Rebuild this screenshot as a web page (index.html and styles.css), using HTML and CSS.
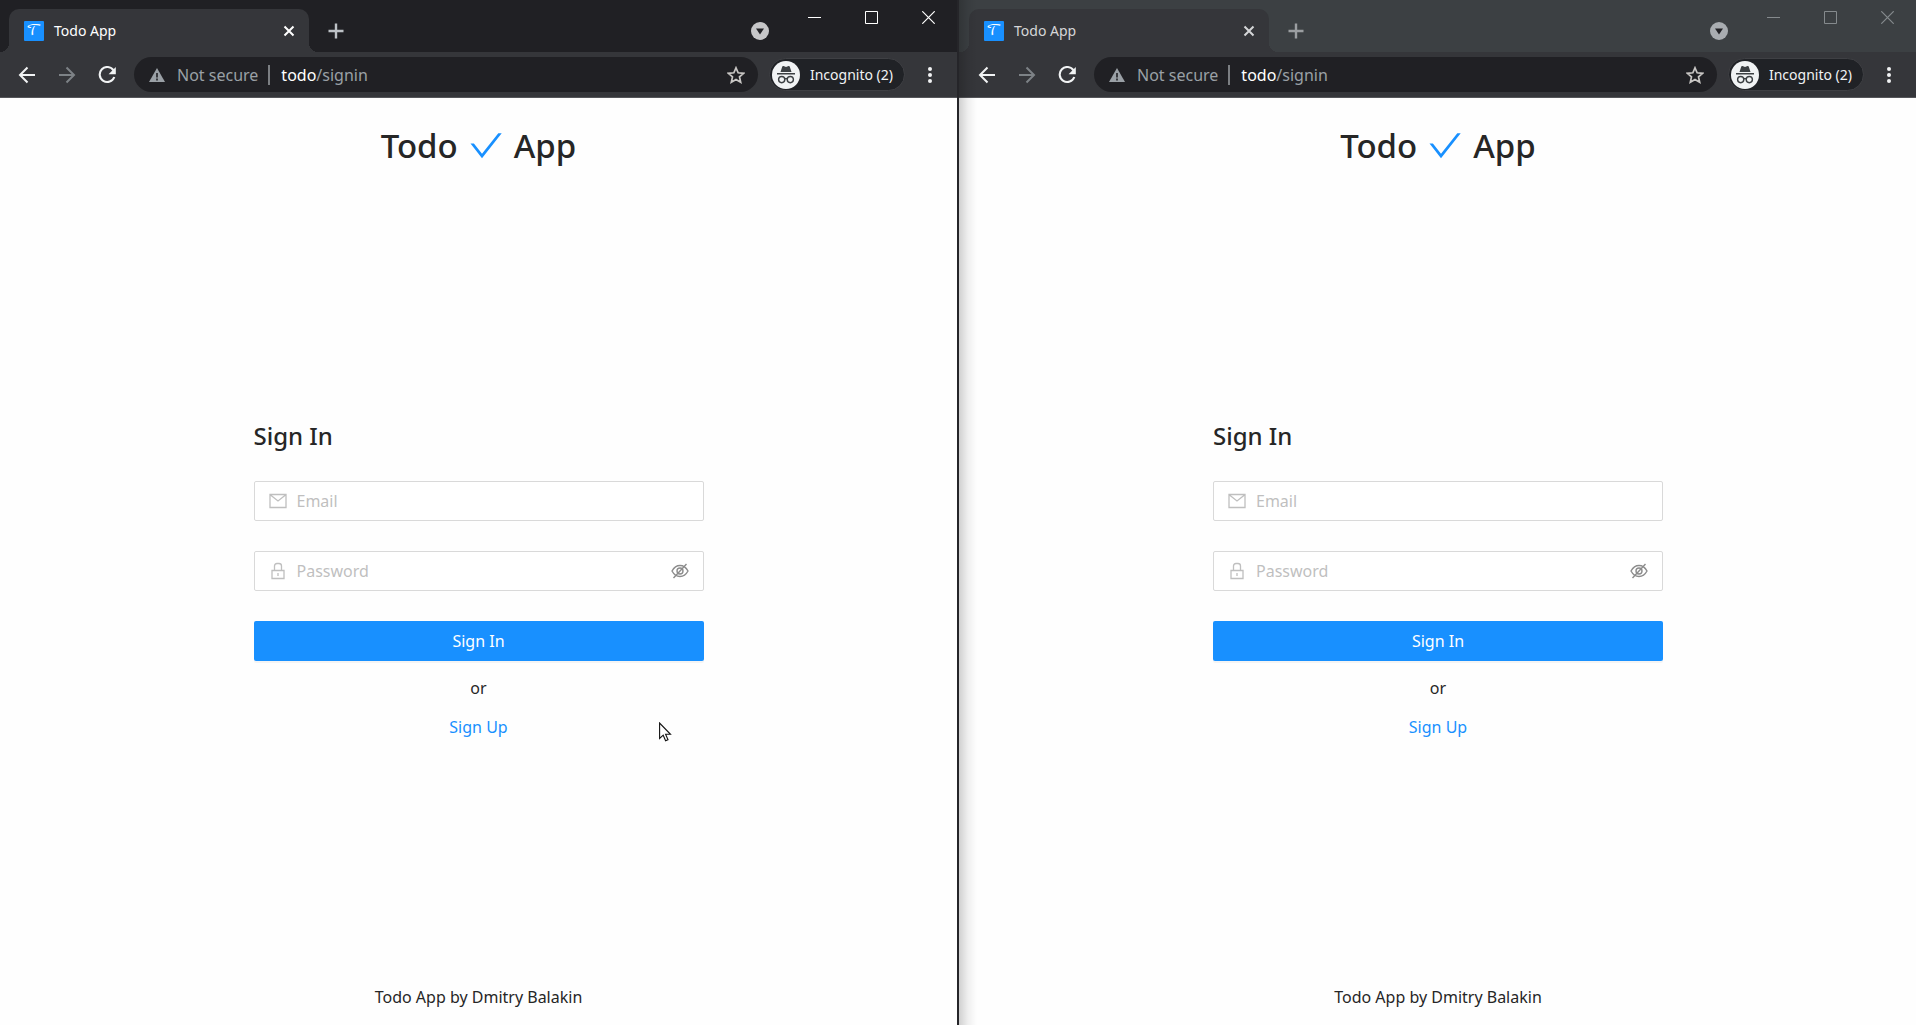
FILE: index.html
```html
<!DOCTYPE html>
<html lang="en">
<head>
<meta charset="utf-8">
<title>Todo App</title>
<link rel="stylesheet" href="styles.css">
</head>
<body>
<svg class="sprite" aria-hidden="true">
  <symbol id="i-close" viewBox="0 0 12 12"><path d="M1.5 1.5l9 9M10.500 1.500l-9 9" stroke="currentColor" stroke-width="2" fill="none"/></symbol>
  <symbol id="i-plus" viewBox="0 0 16 16"><path d="M8 .5v15M.5 8h15" stroke="currentColor" stroke-width="2.400" fill="none"/></symbol>
  <symbol id="i-down" viewBox="0 0 18 18"><circle cx="9" cy="9" r="9" fill="currentColor"/><path d="M5 6.500h8l-4 6z" fill="#222226"/></symbol>
  <symbol id="i-min" viewBox="0 0 13 13"><path d="M0 6.500h13" stroke="currentColor" fill="none"/></symbol>
  <symbol id="i-max" viewBox="0 0 13 13"><path d="M.5.5h12v12h-12z" stroke="currentColor" fill="none"/></symbol>
  <symbol id="i-x" viewBox="0 0 13 13"><path d="M.3.3l12.400 12.400M12.700.3L.3 12.700" stroke="currentColor" stroke-width="1.200" fill="none"/></symbol>
  <symbol id="i-back" viewBox="0 0 18 18"><path d="M17 9H2M9.500 1.500L2 9l7.500 7.500" stroke="currentColor" stroke-width="2" fill="none"/></symbol>
  <symbol id="i-forward" viewBox="0 0 18 18"><path d="M1 9H16M8.500 1.500L16 9l-7.500 7.500" stroke="currentColor" stroke-width="2" fill="none"/></symbol>
  <symbol id="i-reload" viewBox="0 0 18 18"><path d="M15.500 4.400A7.500 7.500 0 1 0 16.300 11" stroke="currentColor" stroke-width="2.100" fill="none"/><path d="M17.800 1v7.200h-7.200z" fill="currentColor"/></symbol>
  <symbol id="i-warn" viewBox="0 0 16 14"><path d="M8 0l8 14H0z" fill="currentColor"/><path d="M8 5v4.500M8 10.500v2" stroke="#202024" stroke-width="1.600"/></symbol>
  <symbol id="i-star" viewBox="0 0 18 18"><path d="M9 1.800l2.150 5 5.450.5-4.100 3.600 1.200 5.300L9 13.400l-4.700 2.800 1.200-5.300L1.400 7.300l5.450-.5z" stroke="currentColor" stroke-width="1.700" fill="none"/></symbol>
  <symbol id="i-spy" viewBox="0 0 28 28"><circle cx="14" cy="14" r="14" fill="#f1f3f4"/><path d="M8.500 11l1.700-5.300q.3-.9 1.300-.6l2.500.8 2.500-.8q1-.3 1.300.6L19.500 11zM5 12h18v1.400H5z" fill="#3c4043"/><g fill="none" stroke="#3c4043" stroke-width="1.400"><circle cx="9.700" cy="18.600" r="3.100"/><circle cx="18.300" cy="18.600" r="3.100"/><path d="M12.700 18q1.300-.9 2.600 0"/></g></symbol>
  <symbol id="i-dots" viewBox="0 0 4 16"><circle cx="2" cy="2" r="2"/><circle cx="2" cy="8" r="2"/><circle cx="2" cy="14" r="2"/></symbol>
  <symbol id="i-check" viewBox="0 0 32 26"><path d="M.5 10.500h3.400l8.100 10.200L28.300.3h3.400L12 25.300z" fill="#1890ff"/></symbol>
  <symbol id="i-mail" viewBox="0 0 18 16"><path d="M1 1.500h16v13H1zM1.500 2L9 8l7.500-6" stroke="currentColor" stroke-width="1.300" fill="none"/></symbol>
  <symbol id="i-lock" viewBox="0 0 18 18"><path d="M3 8.500h12v8H3zM5.500 8.500V4q0-2.500 2.500-2.500h2q2.500 0 2.500 2.500v4.500M9 11v3" stroke="currentColor" stroke-width="1.300" fill="none"/></symbol>
  <symbol id="i-eye" viewBox="0 0 18 18"><path d="M1 9q3-5.500 8-5.500T17 9q-3 5.500-8 5.500T1 9zM2.500 16L15.500 2" stroke="currentColor" stroke-width="1.400" fill="none"/><circle cx="9" cy="9" r="3" stroke="currentColor" stroke-width="1.400" fill="none"/></symbol>
</svg>

<div class="desktop">
  <section class="window" aria-label="First window">
    <header class="tabstrip">
      <div class="tab">
        <span class="favicon" aria-hidden="true">𝒯</span>
        <span class="tab-title">Todo App</span>
        <button class="icon-button" aria-label="Close tab"><svg class="s12"><use href="#i-close"/></svg></button>
      </div>
      <button class="icon-button new-tab" aria-label="New tab"><svg class="s16"><use href="#i-plus"/></svg></button>
      <button class="icon-button tab-search" aria-label="Search tabs"><svg class="s18"><use href="#i-down"/></svg></button>
      <div class="controls">
        <button class="icon-button" aria-label="Minimize"><svg class="s13"><use href="#i-min"/></svg></button>
        <button class="icon-button" aria-label="Maximize"><svg class="s13"><use href="#i-max"/></svg></button>
        <button class="icon-button" aria-label="Close"><svg class="s13"><use href="#i-x"/></svg></button>
      </div>
    </header>
    <nav class="toolbar" aria-label="Browser toolbar">
      <div class="nav-buttons">
        <button class="icon-button" aria-label="Back"><svg class="s18"><use href="#i-back"/></svg></button>
        <button class="icon-button muted" aria-label="Forward"><svg class="s18"><use href="#i-forward"/></svg></button>
        <button class="icon-button" aria-label="Reload"><svg class="s18"><use href="#i-reload"/></svg></button>
      </div>
      <div class="omnibox">
        <svg class="warn"><use href="#i-warn"/></svg>
        <span class="security">Not secure</span>
        <span class="url"><b>todo</b>/signin</span>
        <button class="icon-button star" aria-label="Bookmark"><svg class="s18"><use href="#i-star"/></svg></button>
      </div>
      <button class="profile"><svg class="s28"><use href="#i-spy"/></svg>Incognito (2)</button>
      <button class="icon-button menu" aria-label="Menu"><svg class="dots"><use href="#i-dots"/></svg></button>
    </nav>
    <div class="page">
      <header class="page-header"><h1>Todo <svg class="check"><use href="#i-check"/></svg> App</h1></header>
      <main>
        <form class="signin">
          <h2>Sign In</h2>
          <label class="field"><svg class="s18"><use href="#i-mail"/></svg><input type="email" placeholder="Email" aria-label="Email"></label>
          <div class="field"><svg class="s18"><use href="#i-lock"/></svg><input type="password" placeholder="Password" aria-label="Password"><button type="button" class="icon-button reveal" aria-label="Show password"><svg class="s18"><use href="#i-eye"/></svg></button></div>
          <button class="submit" type="submit">Sign In</button>
          <p>or</p>
          <a href="#signup">Sign Up</a>
        </form>
      </main>
      <footer>Todo App by Dmitry Balakin</footer>
    </div>
    <svg class="cursor" viewBox="0 0 13 20" aria-hidden="true"><path d="M.6 1v15.500l3.600-3.300 2.400 5.600 2.400-1-2.400-5.500h4.900z" fill="#fff" stroke="#111" stroke-width="1.100"/></svg>
  </section>

  <section class="window inactive" aria-label="Second window">
    <header class="tabstrip">
      <div class="tab">
        <span class="favicon" aria-hidden="true">𝒯</span>
        <span class="tab-title">Todo App</span>
        <button class="icon-button" aria-label="Close tab"><svg class="s12"><use href="#i-close"/></svg></button>
      </div>
      <button class="icon-button new-tab" aria-label="New tab"><svg class="s16"><use href="#i-plus"/></svg></button>
      <button class="icon-button tab-search" aria-label="Search tabs"><svg class="s18"><use href="#i-down"/></svg></button>
      <div class="controls">
        <button class="icon-button" aria-label="Minimize"><svg class="s13"><use href="#i-min"/></svg></button>
        <button class="icon-button" aria-label="Maximize"><svg class="s13"><use href="#i-max"/></svg></button>
        <button class="icon-button" aria-label="Close"><svg class="s13"><use href="#i-x"/></svg></button>
      </div>
    </header>
    <nav class="toolbar" aria-label="Browser toolbar">
      <div class="nav-buttons">
        <button class="icon-button" aria-label="Back"><svg class="s18"><use href="#i-back"/></svg></button>
        <button class="icon-button muted" aria-label="Forward"><svg class="s18"><use href="#i-forward"/></svg></button>
        <button class="icon-button" aria-label="Reload"><svg class="s18"><use href="#i-reload"/></svg></button>
      </div>
      <div class="omnibox">
        <svg class="warn"><use href="#i-warn"/></svg>
        <span class="security">Not secure</span>
        <span class="url"><b>todo</b>/signin</span>
        <button class="icon-button star" aria-label="Bookmark"><svg class="s18"><use href="#i-star"/></svg></button>
      </div>
      <button class="profile"><svg class="s28"><use href="#i-spy"/></svg>Incognito (2)</button>
      <button class="icon-button menu" aria-label="Menu"><svg class="dots"><use href="#i-dots"/></svg></button>
    </nav>
    <div class="page">
      <header class="page-header"><h1>Todo <svg class="check"><use href="#i-check"/></svg> App</h1></header>
      <main>
        <form class="signin">
          <h2>Sign In</h2>
          <label class="field"><svg class="s18"><use href="#i-mail"/></svg><input type="email" placeholder="Email" aria-label="Email"></label>
          <div class="field"><svg class="s18"><use href="#i-lock"/></svg><input type="password" placeholder="Password" aria-label="Password"><button type="button" class="icon-button reveal" aria-label="Show password"><svg class="s18"><use href="#i-eye"/></svg></button></div>
          <button class="submit" type="submit">Sign In</button>
          <p>or</p>
          <a href="#signup">Sign Up</a>
        </form>
      </main>
      <footer>Todo App by Dmitry Balakin</footer>
    </div>
  </section>
</div>
</body>
</html>
```
FILE: styles.css
```css
* { box-sizing: border-box; }
body {
  margin: 0;
  font: 16px/24px "Segoe UI", "Noto Sans", "Open Sans", sans-serif;
  color: #262626;
}
h1, h2, p { margin: 0; }
button, input { font: inherit; }
svg { display: block; flex: none; }
.sprite { position: absolute; width: 0; height: 0; }

.s12 { width: 12px; height: 12px; }
.s13 { width: 13px; height: 13px; }
.s16 { width: 16px; height: 16px; }
.s18 { width: 18px; height: 18px; }
.s28 { width: 28px; height: 28px; }

.desktop {
  display: grid;
  grid-template-columns: 1fr 1fr;
  min-height: 100vh;
  background: #252529;
}
.window {
  position: relative;
  display: flex;
  flex-direction: column;
  min-width: 0;
  border-right: 1px solid #252529;
  background: #35363a;
}

.icon-button {
  display: flex;
  align-items: center;
  justify-content: center;
  padding: 0;
  border: 0;
  background: none;
  color: inherit;
}

/* Tab strip */
.tabstrip {
  display: flex;
  height: 52px;
  background: #202024;
  color: #fff;
}
.tab {
  position: relative;
  display: flex;
  align-items: center;
  gap: 10px;
  width: 300px;
  height: 43px;
  margin: 9px 0 0 9px;
  padding: 0 14px 0 15px;
  border-radius: 10px 10px 0 0;
  background: #35363a;
  font-size: 14px;
}
.tab::before, .tab::after {
  content: "";
  position: absolute;
  bottom: 0;
  width: 9px;
  height: 9px;
}
.tab::before { right: 100%; background: radial-gradient(circle at 0 0, transparent 9px, #35363a 9px); }
.tab::after { left: 100%; background: radial-gradient(circle at 100% 0, transparent 9px, #35363a 9px); }
.favicon {
  width: 20px;
  height: 20px;
  border-radius: 1px;
  background: #1890ff;
  color: #fff;
  font: 15px/20px "DejaVu Math TeX Gyre", "DejaVu Serif", serif;
  text-align: center;
  overflow: hidden;
}
.tab-title { flex: 1; }
.new-tab { width: 36px; margin: 9px 0 0 9px; color: #bdc1c6; }
.tab-search { width: 36px; margin: 9px 8px 0 auto; color: #c6c6c8; }
.controls { display: flex; height: 35px; }
.controls .icon-button { width: 57px; }

/* Toolbar */
.toolbar {
  display: flex;
  align-items: center;
  height: 46px;
  padding-right: 10px;
  border-bottom: 1px solid #55565a;
  color: #f1f3f4;
}
.nav-buttons { display: flex; padding: 0 7px; }
.nav-buttons .icon-button { width: 40px; height: 40px; }
.icon-button.muted { color: #7d8286; }
.omnibox {
  display: flex;
  flex: 1;
  align-items: center;
  height: 35px;
  padding: 0 13px 0 15px;
  border-radius: 18px;
  background: #202024;
  color: #9aa0a6;
}
.warn { width: 16px; height: 14px; }
.security {
  margin-left: 12px;
  padding-right: 10px;
  border-right: 2px solid #7b7e82;
  line-height: 20px;
}
.url { flex: 1; margin-left: 11px; }
.url b { color: #fff; font-weight: 400; }
.star { color: #c8c6c4; }
.profile {
  display: flex;
  align-items: center;
  gap: 10px;
  height: 33px;
  margin-left: 11px;
  padding: 0 11px 0 2px;
  border: 1px solid #3f4044;
  border-radius: 17px;
  background: #202226;
  color: #f1f3f4;
  font-size: 14px;
}
.menu { width: 34px; height: 34px; margin-left: 8px; }
.dots { width: 4px; height: 16px; fill: currentColor; }

/* Page */
.page {
  display: flex;
  flex: 1;
  flex-direction: column;
  background: #fefefe;
}
.page-header { padding: 24px 0 28px; }
h1 {
  display: flex;
  align-items: center;
  justify-content: center;
  gap: 12px;
  font-size: 33px;
  line-height: 48px;
  font-weight: 500;
}
.check { width: 32px; height: 26px; }
main { display: flex; flex: 1; align-items: center; justify-content: center; }
.signin {
  display: flex;
  flex-direction: column;
  width: 450px;
  max-width: 100%;
  text-align: center;
}
h2 {
  margin-bottom: 29px;
  font-size: 24px;
  line-height: 32px;
  font-weight: 500;
  text-align: left;
}
.field {
  display: flex;
  align-items: center;
  gap: 10px;
  height: 40px;
  margin-bottom: 30px;
  padding: 0 14px;
  border: 1px solid #d9d9d9;
  border-radius: 2px;
  background: #fff;
  color: #bfbfbf;
}
.field input {
  flex: 1;
  min-width: 0;
  padding: 0;
  border: 0;
  outline: 0;
  background: none;
  color: #262626;
}
.field input::placeholder { color: #bfbfbf; opacity: 1; }
.reveal { color: #8c8c8c; }
.submit {
  height: 40px;
  padding: 0;
  border: 0;
  border-radius: 2px;
  background: #1890ff;
  box-shadow: 0 2px 0 rgba(0, 0, 0, 0.04);
  color: #fff;
}
.signin p { margin: 15px 0; }
.signin a { color: #1890ff; text-decoration: none; }
footer { padding: 24px 0 16px; text-align: center; }

/* Mouse pointer over the first window */
.cursor { position: absolute; top: 722px; left: 659px; width: 13px; height: 20px; }

/* Window without focus, shaded by its neighbour */
.inactive { border-right: 0; border-left: 1px solid #252529; }
.inactive > * { padding-left: 1px; }
.inactive .tabstrip { background: #3c4043; color: #d5d6d8; }
.inactive .new-tab { color: #9b9ea1; }
.inactive .tab-search { color: #a9adb1; }
.inactive .controls { color: #858a8d; }
.inactive::before {
  content: "";
  position: absolute;
  z-index: 1;
  inset: 0 auto 0 0;
  width: 18px;
  background: linear-gradient(to right, rgba(0, 0, 0, 0.18), rgba(0, 0, 0, 0.06) 50%, transparent);
  pointer-events: none;
}
```
